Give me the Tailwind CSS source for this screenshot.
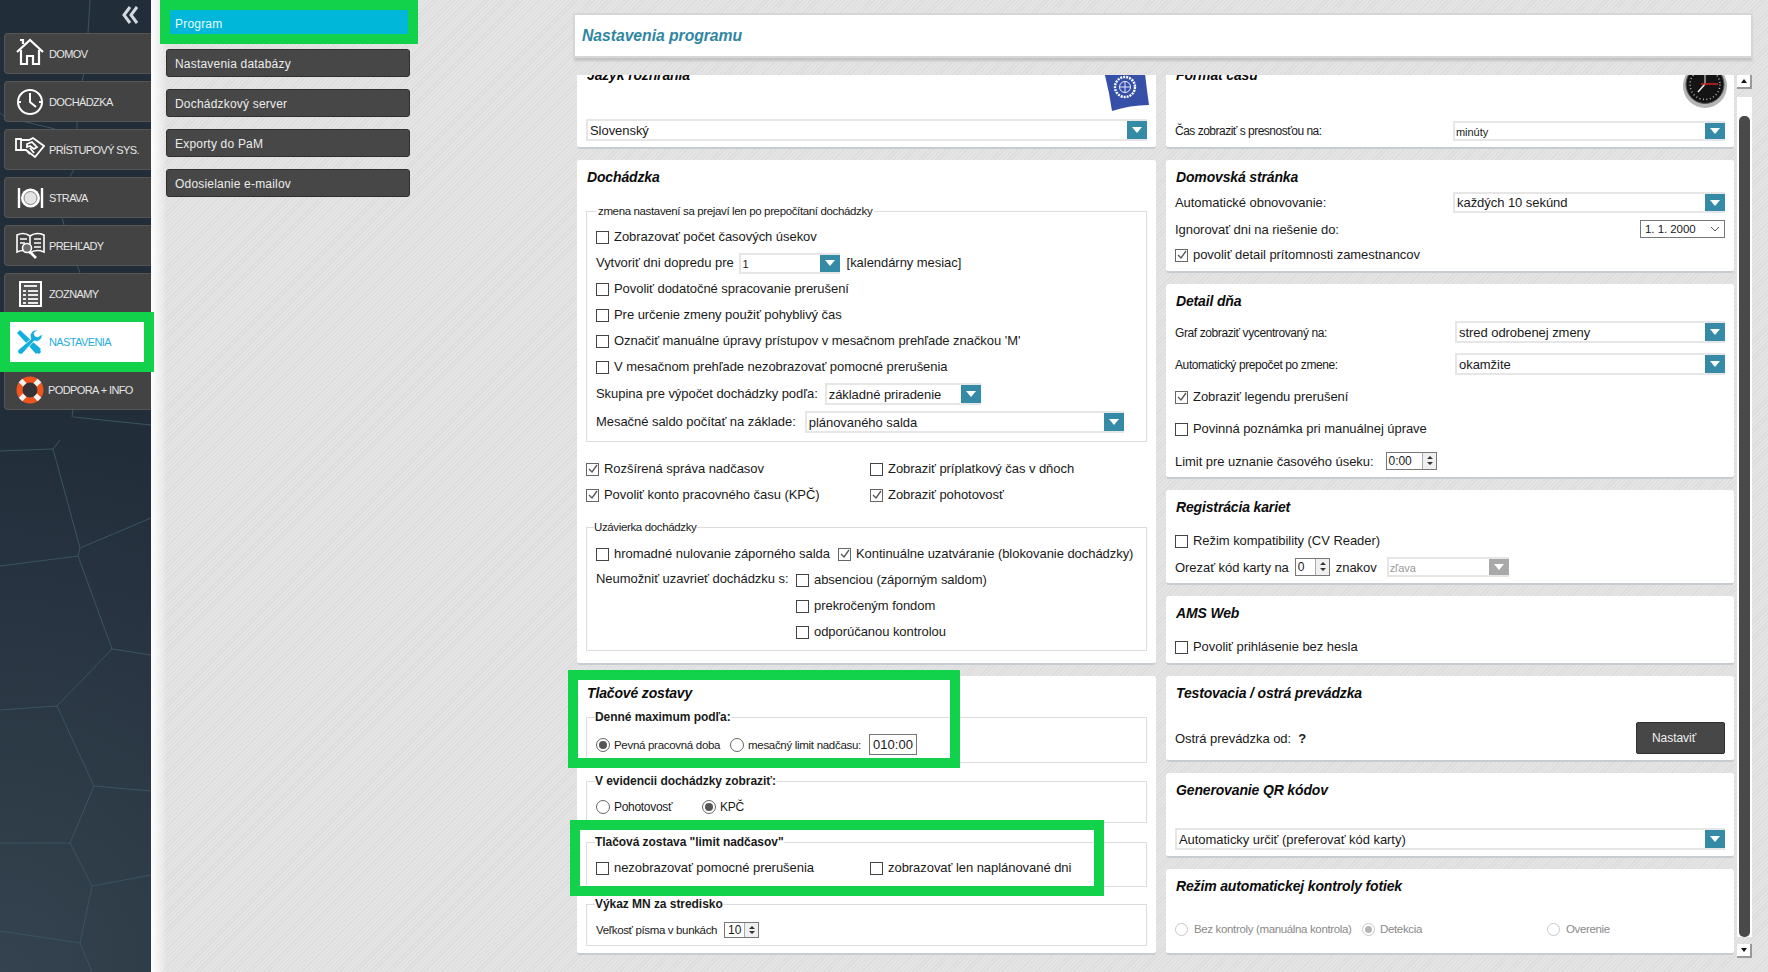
<!DOCTYPE html>
<html lang="sk">
<head>
  <meta charset="UTF-8" />
  <title>Nastavenia programu</title>
  <script src="https://cdn.jsdelivr.net/npm/@tailwindcss/browser@4"></script>
</head>
<body class="overflow-hidden font-['Liberation_Sans',Arial,sans-serif] text-[13px] leading-[16px] tracking-[-0.05px] text-[#1a1a1a]">
<div class="relative flex h-[972px] w-[1768px] overflow-hidden bg-[#e2e2e2] bg-[repeating-linear-gradient(135deg,#dcdcdc_0,#dcdcdc_1px,#e4e4e4_1px,#e4e4e4_3px)]">

  <!-- sidebar -->
  <aside class="relative z-10 w-[151px] h-full shrink-0 bg-[#222d3a] bg-[radial-gradient(circle_at_0%_100%,#34434f_0,#222d3a_55%)]">
    <svg class="absolute inset-0" width="151" height="972" fill="none" stroke="#3a5560" stroke-width="1">
      <path d="M90 0L88 33M84 73L82 81M77 121L77 129M74 169L70 177M62 217L64 225M77 265L80 273M0 113L5 117L55 129" />
      <path d="M72 417L73 410M73 417L151 425M0 451L53 449L60 440M53 449L80 548L151 518M80 548L78 556M0 566L78 556L112 649L151 655M112 649L57 706M0 710L57 706L94 786L151 791M94 786L70 843M0 843L70 843L92 886L151 875M92 886L80 943M0 931L80 943L92 972" />
    </svg>
    <div class="relative flex justify-end pt-[6px] pr-[13px] h-[33px]">
      <svg width="16" height="18" viewBox="0 0 16 18" fill="none" stroke="#d4d9dd" stroke-width="3">
        <path d="M8 1L2 9l6 8M15 1L9 9l6 8" />
      </svg>
    </div>
    <nav class="relative flex flex-col gap-[7px] pl-[4px] text-[11px] tracking-[-0.6px] text-[#e6e6e6]">
      <a class="flex items-center h-[41px] rounded-l-[4px] border border-r-0 border-[#565656] bg-[#434343]">
        <svg class="ml-[11px] w-[28px] h-[28px] -mt-[4px]" viewBox="0 0 28 28" fill="none" stroke="#fff" stroke-width="2.200"><path d="M1 14L14 2l13 12M5 12v14h6v-8h6v8h6V12M4 2h3v4" /></svg>
        <span class="ml-[5px]">DOMOV</span>
      </a>
      <a class="flex items-center h-[41px] rounded-l-[4px] border border-r-0 border-[#565656] bg-[#434343]">
        <svg class="ml-[11px] w-[28px] h-[28px]" viewBox="0 0 28 28" fill="none" stroke="#fff" stroke-width="2"><circle cx="14" cy="14" r="12" /><path d="M14 5v9l6 5M2 14h3M23 14h3" /></svg>
        <span class="ml-[5px]">DOCHÁDZKA</span>
      </a>
      <a class="flex items-center h-[41px] rounded-l-[4px] border border-r-0 border-[#565656] bg-[#434343]">
        <svg class="ml-[10px] w-[30px] h-[22px] -mt-[5px]" viewBox="0 0 30 22" fill="none" stroke="#fff" stroke-width="1.800"><path d="M1 3h5v11H1zM6 4l8 0 4-2 11 8-9 11-9-7-5 0M12 8l5-2 5 5-3 2-4-3-3 1zM12 15l3 3M15 12l4 5" /></svg>
        <span class="ml-[4px] whitespace-nowrap">PRÍSTUPOVÝ SYS.</span>
      </a>
      <a class="flex items-center h-[41px] rounded-l-[4px] border border-r-0 border-[#565656] bg-[#434343]">
        <svg class="ml-[12px] w-[27px] h-[24px]" viewBox="0 0 27 24" fill="none" stroke="#fff"><circle cx="13.500" cy="12" r="9.500" fill="#fff" stroke="none" /><circle cx="13.500" cy="12" r="6.500" fill="#e4e4e4" stroke="#888" /><path d="M2 2v20M25 2v20" stroke-width="2.400" /></svg>
        <span class="ml-[5px]">STRAVA</span>
      </a>
      <a class="flex items-center h-[41px] rounded-l-[4px] border border-r-0 border-[#565656] bg-[#434343]">
        <svg class="ml-[11px] w-[29px] h-[27px]" viewBox="0 0 29 27" fill="none" stroke="#fff" stroke-width="1.600"><path d="M14 4C10 1 5 1 1 3v17c4-2 9-2 13 1 4-3 9-3 14-1V3c-5-2-10-2-14 1zM14 4v17M4 7h7M4 11h5M18 7h7M18 11h7M18 15h7" /><circle cx="11" cy="16" r="4.500" fill="#6a6a6a" /><path d="M14 20l6 6" stroke-width="2.600" /></svg>
        <span class="ml-[4px]">PREHĽADY</span>
      </a>
      <a class="flex items-center h-[41px] rounded-l-[4px] border border-r-0 border-[#565656] bg-[#434343]">
        <svg class="ml-[14px] w-[23px] h-[26px]" viewBox="0 0 23 26"><rect x="1" y="1" width="21" height="24" fill="#555" stroke="#fff" stroke-width="2" /><path d="M5 5h13M4 10h3M9 10h10M4 14h3M9 14h10M4 18h3M9 18h10M4 22h3M9 22h10" stroke="#e8e8e8" stroke-width="1.800" /></svg>
        <span class="ml-[7px]">ZOZNAMY</span>
      </a>
      <a class="flex items-center h-[41px] bg-white text-[#27aedb]">
        <svg class="ml-[12px] w-[27px] h-[26px]" viewBox="0 0 27 26"><path d="M1 4l3-3 13 12 8 7-1 1 1 2-2 2-2-1-1 1-7-8z" fill="#13aee0" /><path d="M20 1a6 6 0 0 0-5 9L2 21a3 3 0 0 0 4 4l12-13a6 6 0 0 0 8-7l-4 3-3-1-1-3 4-3z" fill="#13aee0" stroke="#fff" stroke-width=".8" /></svg>
        <span class="ml-[6px]">NASTAVENIA</span>
      </a>
      <a class="flex items-center h-[41px] rounded-l-[4px] border border-r-0 border-[#565656] bg-[#434343]">
        <svg class="ml-[11px] w-[28px] h-[28px]" viewBox="0 0 28 28" fill="none"><circle cx="14" cy="14" r="7.500" fill="#333" /><circle cx="14" cy="14" r="10.500" stroke="#f0551e" stroke-width="6" /><path d="M4.500 4.500L8.700 8.700M23.500 4.500L19.300 8.700M4.500 23.500L8.700 19.300M23.500 23.500L19.300 19.300" stroke="#f2f2f2" stroke-width="5" /></svg>
        <span class="ml-[4px] whitespace-nowrap">PODPORA + INFO</span>
      </a>
    </nav>
  </aside>

  <!-- submenu -->
  <div class="relative w-[422px] shrink-0 pl-[15px] pt-[9px] bg-[linear-gradient(90deg,#ffffff_0,#ffffff00_16px)]">
    <div class="flex flex-col gap-[12px] w-[244px] text-[12px] text-[#ececec] tracking-[0.2px]">
      <a class="flex items-center h-[28px] pl-[9px] pt-[1px] bg-[#00b6d9] text-[#eafaff]">Program</a>
      <a class="flex items-center h-[28px] pl-[8px] pt-[1px] rounded-[3px] border border-[#2f2f2f] bg-[#474747]">Nastavenia databázy</a>
      <a class="flex items-center h-[28px] pl-[8px] pt-[1px] rounded-[3px] border border-[#2f2f2f] bg-[#474747]">Dochádzkový server</a>
      <a class="flex items-center h-[28px] pl-[8px] pt-[1px] rounded-[3px] border border-[#2f2f2f] bg-[#474747]">Exporty do PaM</a>
      <a class="flex items-center h-[28px] pl-[8px] pt-[1px] rounded-[3px] border border-[#2f2f2f] bg-[#474747]">Odosielanie e-mailov</a>
    </div>
  </div>

  <!-- main -->
  <main class="w-[1180px] shrink-0 pt-[13px]">
    <header class="flex items-center h-[45px] pl-[7px] pt-[1px] bg-white border-2 border-double border-[#d6d6d6] shadow-[0_4px_2px_-1px_#c4c4c4]">
      <h1 class="text-[15.75px] font-bold italic text-[#2f86a2]">Nastavenia programu</h1>
    </header>

    <div class="flex mt-[17px] ml-[4px] h-[885px] overflow-hidden">
      <!-- left column -->
      <div class="w-[579px] -mt-[17px] flex flex-col gap-[11px]">
        <section class="relative h-[91px] px-[9px] pt-[8px] bg-white rounded-[3px] border-b-2 border-[#c6ccd0]">
          <h2 class="h-[18px] pl-[1px] font-bold italic text-[14px] tracking-[-0.15px] leading-[18px] text-[#0c0c0c]">Jazyk rozhrania</h2>
          <svg class="absolute left-[523px] top-[6px]" width="50" height="50" viewBox="0 0 50 50">
            <path d="M2 0L44 0Q46 20 49 41Q30 41 12 47Q9 25 2 0z" fill="#3650a8" />
            <circle cx="25" cy="23" r="10" fill="none" stroke="#fff" stroke-width="2.400" stroke-dasharray="2 1" />
            <circle cx="25" cy="23" r="5.500" fill="#3650a8" stroke="#eef" />
            <path d="M20 23h10M25 18v10" stroke="#dfe5f5" />
          </svg>
          <div class="flex mt-[35px] h-[22px] border-2 border-r-0 border-[#e6e6e6]">
            <span class="flex-1 pl-[2px] leading-[20px]">Slovenský</span>
            <span class="flex items-center justify-center w-[20px] h-[18px] bg-[#358aa5]"><svg width="10" height="6"><path d="M0 0h10L5 6z" fill="#fff" /></svg></span>
          </div>
        </section>

        <section class="h-[505px] px-[9px] pt-[8px] bg-white rounded-[3px] border-b-2 border-[#c6ccd0]">
          <h2 class="h-[18px] pl-[1px] font-bold italic text-[14px] tracking-[-0.15px] leading-[18px] text-[#0c0c0c]">Dochádzka</h2>
          <fieldset class="mt-[18px] px-[9px] pt-[6px] pb-[5px] border border-[#dcdcdc]">
            <legend class="px-[2px] text-[11.5px] leading-[14px] tracking-[-0.36px]">zmena nastavení sa prejaví len po prepočítaní dochádzky</legend>
            <label class="flex items-center h-[26px] gap-[5px]"><span class="w-[13px] h-[13px] border border-[#444]"></span>Zobrazovať počet časových úsekov</label>
            <div class="flex items-center h-[26px]">
              <span>Vytvoriť dni dopredu pre</span>
              <div class="flex ml-[5px] w-[101px] h-[21px] border-2 border-r-0 border-[#e6e6e6]">
                <span class="flex-1 pl-[2px] text-[11px] leading-[19px]">1</span>
                <span class="flex items-center justify-center w-[20px] h-[17px] bg-[#358aa5]"><svg width="10" height="6"><path d="M0 0h10L5 6z" fill="#fff" /></svg></span>
              </div>
              <span class="ml-[7px]">[kalendárny mesiac]</span>
            </div>
            <label class="flex items-center h-[26px] gap-[5px]"><span class="w-[13px] h-[13px] border border-[#444]"></span>Povoliť dodatočné spracovanie prerušení</label>
            <label class="flex items-center h-[26px] gap-[5px]"><span class="w-[13px] h-[13px] border border-[#444]"></span>Pre určenie zmeny použiť pohyblivý čas</label>
            <label class="flex items-center h-[26px] gap-[5px]"><span class="w-[13px] h-[13px] border border-[#444]"></span>Označiť manuálne úpravy prístupov v mesačnom prehľade značkou 'M'</label>
            <label class="flex items-center h-[26px] gap-[5px]"><span class="w-[13px] h-[13px] border border-[#444]"></span>V mesačnom prehľade nezobrazovať pomocné prerušenia</label>
            <div class="flex items-center h-[28px]">
              <span>Skupina pre výpočet dochádzky podľa:</span>
              <div class="flex ml-[7px] w-[156px] h-[22px] border-2 border-r-0 border-[#e6e6e6]">
                <span class="flex-1 pl-[2px] leading-[20px]">základné priradenie</span>
                <span class="flex items-center justify-center w-[20px] h-[18px] bg-[#358aa5]"><svg width="10" height="6"><path d="M0 0h10L5 6z" fill="#fff" /></svg></span>
              </div>
            </div>
            <div class="flex items-center h-[28px]">
              <span>Mesačné saldo počítať na základe:</span>
              <div class="flex ml-[9px] w-[319px] h-[22px] border-2 border-r-0 border-[#e6e6e6]">
                <span class="flex-1 pl-[2px] leading-[20px]">plánovaného salda</span>
                <span class="flex items-center justify-center w-[20px] h-[18px] bg-[#358aa5]"><svg width="10" height="6"><path d="M0 0h10L5 6z" fill="#fff" /></svg></span>
              </div>
            </div>
          </fieldset>
          <div class="grid grid-cols-[284px_1fr] mt-[14px]">
            <label class="flex items-center h-[26px] gap-[5px]"><span class="flex items-center justify-center w-[13px] h-[13px] border border-[#666]"><svg width="11" height="11" fill="none" stroke="#555" stroke-width="1.300"><path d="M2 5l3 3 5-7" /></svg></span>Rozšírená správa nadčasov</label>
            <label class="flex items-center h-[26px] gap-[5px]"><span class="w-[13px] h-[13px] border border-[#444]"></span>Zobraziť príplatkový čas v dňoch</label>
            <label class="flex items-center h-[26px] gap-[5px]"><span class="flex items-center justify-center w-[13px] h-[13px] border border-[#666]"><svg width="11" height="11" fill="none" stroke="#555" stroke-width="1.300"><path d="M2 5l3 3 5-7" /></svg></span>Povoliť konto pracovného času (KPČ)</label>
            <label class="flex items-center h-[26px] gap-[5px]"><span class="flex items-center justify-center w-[13px] h-[13px] border border-[#666]"><svg width="11" height="11" fill="none" stroke="#555" stroke-width="1.300"><path d="M2 5l3 3 5-7" /></svg></span>Zobraziť pohotovosť</label>
          </div>
          <fieldset class="mt-[12px] px-[9px] pt-[7px] pb-[5px] border border-[#dcdcdc]">
            <legend class="-ml-[2px] text-[11.5px] leading-[14px] tracking-[-0.36px]">Uzávierka dochádzky</legend>
            <div class="flex">
              <label class="flex items-center h-[26px] gap-[5px] w-[242px]"><span class="w-[13px] h-[13px] border border-[#444]"></span>hromadné nulovanie záporného salda</label>
              <label class="flex items-center h-[26px] gap-[5px]"><span class="flex items-center justify-center w-[13px] h-[13px] border border-[#666]"><svg width="11" height="11" fill="none" stroke="#555" stroke-width="1.300"><path d="M2 5l3 3 5-7" /></svg></span>Kontinuálne uzatváranie (blokovanie dochádzky)</label>
            </div>
            <div class="flex">
              <span class="w-[200px] h-[26px] leading-[24px]">Neumožniť uzavrieť dochádzku s:</span>
              <div>
                <label class="flex items-center h-[26px] gap-[5px]"><span class="w-[13px] h-[13px] border border-[#444]"></span>absenciou (záporným saldom)</label>
                <label class="flex items-center h-[26px] gap-[5px]"><span class="w-[13px] h-[13px] border border-[#444]"></span>prekročeným fondom</label>
                <label class="flex items-center h-[26px] gap-[5px]"><span class="w-[13px] h-[13px] border border-[#444]"></span>odporúčanou kontrolou</label>
              </div>
            </div>
          </fieldset>
        </section>

        <section class="h-[279px] px-[9px] pt-[8px] bg-white rounded-[3px] border-b-2 border-[#c6ccd0]">
          <h2 class="h-[18px] pl-[1px] font-bold italic text-[14px] tracking-[-0.15px] leading-[18px] text-[#0c0c0c]">Tlačové zostavy</h2>
          <fieldset class="mt-[8px] px-[9px] pt-[10px] pb-[7px] border border-[#dcdcdc]">
            <legend class="-ml-[1px] font-bold text-[12px] leading-[14px]">Denné maximum podľa:</legend>
            <div class="flex items-center h-[21px] text-[11.5px] tracking-[-0.3px]">
              <span class="flex items-center justify-center w-[14px] h-[14px] rounded-full border border-[#666]"><span class="w-[8px] h-[8px] rounded-full bg-[#555]"></span></span>
              <span class="ml-[4px] w-[116px]">Pevná pracovná doba</span>
              <span class="w-[14px] h-[14px] rounded-full border border-[#666]"></span>
              <span class="ml-[4px] w-[121px]">mesačný limit nadčasu:</span>
              <span class="flex items-center justify-center w-[48px] h-[21px] border border-[#777] text-[13px] tracking-normal">010:00</span>
            </div>
          </fieldset>
          <fieldset class="mt-[11px] px-[9px] pt-[7px] pb-[3px] border border-[#dcdcdc]">
            <legend class="-ml-[1px] font-bold text-[12px] leading-[14px]">V evidencii dochádzky zobraziť:</legend>
            <div class="flex items-center h-[24px] text-[12px] tracking-[-0.3px]">
              <span class="w-[14px] h-[14px] rounded-full border border-[#666]"></span>
              <span class="ml-[4px] w-[88px]">Pohotovosť</span>
              <span class="flex items-center justify-center w-[14px] h-[14px] rounded-full border border-[#666]"><span class="w-[8px] h-[8px] rounded-full bg-[#555]"></span></span>
              <span class="ml-[4px]">KPČ</span>
            </div>
          </fieldset>
          <fieldset class="mt-[12px] px-[9px] pt-[7px] pb-[6px] border border-[#dcdcdc]">
            <legend class="-ml-[1px] font-bold text-[12px] leading-[14px]">Tlačová zostava "limit nadčasov"</legend>
            <div class="grid grid-cols-[274px_1fr]">
              <label class="flex items-center h-[24px] gap-[5px]"><span class="w-[13px] h-[13px] border border-[#444]"></span>nezobrazovať pomocné prerušenia</label>
              <label class="flex items-center h-[24px] gap-[5px]"><span class="w-[13px] h-[13px] border border-[#444]"></span>zobrazovať len naplánované dni</label>
            </div>
          </fieldset>
          <fieldset class="mt-[10px] px-[9px] pt-[7px] pb-[3px] border border-[#dcdcdc]">
            <legend class="-ml-[1px] font-bold text-[12px] leading-[14px]">Výkaz MN za stredisko</legend>
            <div class="flex items-center h-[24px] text-[11.5px] tracking-[-0.35px]">
              <span>Veľkosť písma v bunkách</span>
              <span class="flex items-center justify-between ml-[7px] w-[35px] h-[16px] pl-[3px] border border-[#777] text-[12px] tracking-normal">10
                <span class="flex flex-col justify-center w-[14px] h-full border-l border-[#aaa] bg-[#f0f0f0]"><svg width="14" height="14" fill="#333"><path d="M4 6l3-3 3 3zM4 8h6l-3 3z" /></svg></span>
              </span>
            </div>
          </fieldset>
        </section>
      </div>

      <!-- right column -->
      <div class="w-[568px] ml-[10px] -mt-[17px] flex flex-col gap-[11px]">
        <section class="relative h-[91px] px-[9px] pt-[8px] bg-white rounded-[3px] border-b-2 border-[#c6ccd0]">
          <h2 class="h-[18px] pl-[1px] font-bold italic text-[14px] tracking-[-0.15px] leading-[18px] text-[#0c0c0c]">Formát času</h2>
          <svg class="absolute right-[7px] top-[6px]" width="44" height="44" viewBox="0 0 44 44">
            <circle cx="22" cy="22" r="22" fill="#b5b5b5" />
            <circle cx="22" cy="20.500" r="19" fill="#141414" stroke="#555" />
            <circle cx="22" cy="20.500" r="15" fill="none" stroke="#bbb" stroke-width="1.500" stroke-dasharray="1 2.500" />
            <path d="M22 20V6" stroke="#eee" /><path d="M22 20l-7 8" stroke="#eee" stroke-width="1.500" /><path d="M18 20h17" stroke="#d62020" stroke-width="1.500" />
          </svg>
          <div class="flex items-center justify-between mt-[37px] h-[20px]">
            <span class="text-[12px] tracking-[-0.5px]">Čas zobraziť s presnosťou na:</span>
            <div class="flex w-[272px] h-[20px] border-2 border-r-0 border-[#e6e6e6]">
              <span class="flex-1 pl-[1px] text-[11px] leading-[18px]">minúty</span>
              <span class="flex items-center justify-center w-[20px] h-[16px] bg-[#358aa5]"><svg width="10" height="6"><path d="M0 0h10L5 6z" fill="#fff" /></svg></span>
            </div>
          </div>
        </section>

        <section class="h-[113px] px-[9px] pt-[8px] bg-white rounded-[3px] border-b-2 border-[#c6ccd0]">
          <h2 class="h-[18px] pl-[1px] font-bold italic text-[14px] tracking-[-0.15px] leading-[18px] text-[#0c0c0c]">Domovská stránka</h2>
          <div class="flex items-center justify-between mt-[6px] h-[21px]">
            <span>Automatické obnovovanie:</span>
            <div class="flex w-[272px] h-[21px] border-2 border-r-0 border-[#e6e6e6]">
              <span class="flex-1 pl-[2px] leading-[17px]">každých 10 sekúnd</span>
              <span class="flex items-center justify-center w-[20px] h-[17px] bg-[#358aa5]"><svg width="10" height="6"><path d="M0 0h10L5 6z" fill="#fff" /></svg></span>
            </div>
          </div>
          <div class="flex items-center justify-between mt-[7px] h-[18px]">
            <span class="pt-[1px]">Ignorovať dni na riešenie do:</span>
            <div class="flex items-center justify-between w-[85px] h-[18px] px-[4px] border border-[#777] text-[11.5px]">1. 1. 2000 <svg width="10" height="6" fill="none" stroke="#555"><path d="M1 1l4 4 4-4" /></svg></div>
          </div>
          <label class="flex items-center h-[20px] mt-[7px] gap-[5px]"><span class="flex items-center justify-center w-[13px] h-[13px] border border-[#666]"><svg width="11" height="11" fill="none" stroke="#555" stroke-width="1.300"><path d="M2 5l3 3 5-7" /></svg></span>povoliť detail prítomnosti zamestnancov</label>
        </section>

        <section class="h-[195px] px-[9px] pt-[8px] bg-white rounded-[3px] border-b-2 border-[#c6ccd0]">
          <h2 class="h-[18px] pl-[1px] font-bold italic text-[14px] tracking-[-0.15px] leading-[18px] text-[#0c0c0c]">Detail dňa</h2>
          <div class="flex items-center justify-between mt-[11px] h-[22px]">
            <span class="pt-[1px] text-[12px] tracking-[-0.4px]">Graf zobraziť vycentrovaný na:</span>
            <div class="flex w-[270px] h-[22px] border-2 border-r-0 border-[#e6e6e6]">
              <span class="flex-1 pl-[2px] leading-[20px]">stred odrobenej zmeny</span>
              <span class="flex items-center justify-center w-[20px] h-[18px] bg-[#358aa5]"><svg width="10" height="6"><path d="M0 0h10L5 6z" fill="#fff" /></svg></span>
            </div>
          </div>
          <div class="flex items-center justify-between mt-[10px] h-[22px]">
            <span class="pt-[1px] text-[12px] tracking-[-0.4px]">Automatický prepočet po zmene:</span>
            <div class="flex w-[270px] h-[22px] border-2 border-r-0 border-[#e6e6e6]">
              <span class="flex-1 pl-[2px] leading-[20px]">okamžite</span>
              <span class="flex items-center justify-center w-[20px] h-[18px] bg-[#358aa5]"><svg width="10" height="6"><path d="M0 0h10L5 6z" fill="#fff" /></svg></span>
            </div>
          </div>
          <label class="flex items-center h-[20px] mt-[12px] gap-[5px]"><span class="flex items-center justify-center w-[13px] h-[13px] border border-[#666]"><svg width="11" height="11" fill="none" stroke="#555" stroke-width="1.300"><path d="M2 5l3 3 5-7" /></svg></span>Zobraziť legendu prerušení</label>
          <label class="flex items-center h-[20px] mt-[12px] gap-[5px]"><span class="w-[13px] h-[13px] border border-[#444]"></span>Povinná poznámka pri manuálnej úprave</label>
          <div class="flex items-center mt-[13px] h-[18px]">
            <span class="pt-[1px]">Limit pre uznanie časového úseku:</span>
            <span class="flex items-center justify-between ml-[12px] w-[51px] h-[18px] pl-[2px] border border-[#777] text-[12px]">0:00
              <span class="w-[14px] h-full border-l border-[#aaa] bg-[#f0f0f0]"><svg width="14" height="16" fill="#333"><path d="M4 6l3-3 3 3zM4 9h6l-3 3z" /></svg></span>
            </span>
          </div>
        </section>

        <section class="h-[95px] px-[9px] pt-[8px] bg-white rounded-[3px] border-b-2 border-[#c6ccd0]">
          <h2 class="h-[18px] pl-[1px] font-bold italic text-[14px] tracking-[-0.15px] leading-[18px] text-[#0c0c0c]">Registrácia kariet</h2>
          <label class="flex items-center h-[20px] mt-[15px] gap-[5px]"><span class="w-[13px] h-[13px] border border-[#444]"></span>Režim kompatibility (CV Reader)</label>
          <div class="flex items-center mt-[6px] h-[20px]">
            <span class="pt-[1px]">Orezať kód karty na</span>
            <span class="flex items-center justify-between ml-[6px] w-[35px] h-[18px] pl-[2px] border border-[#777] text-[12px]">0
              <span class="w-[14px] h-full border-l border-[#aaa] bg-[#f0f0f0]"><svg width="14" height="16" fill="#333"><path d="M4 6l3-3 3 3zM4 9h6l-3 3z" /></svg></span>
            </span>
            <span class="ml-[6px] pt-[1px]">znakov</span>
            <div class="flex ml-[10px] w-[122px] h-[20px] border-2 border-r-0 border-[#e6e6e6]">
              <span class="flex-1 pl-[1px] text-[11px] leading-[18px] text-[#999]">zľava</span>
              <span class="flex items-center justify-center w-[20px] h-[16px] bg-[#a9a9a9]"><svg width="10" height="6"><path d="M0 0h10L5 6z" fill="#fff" /></svg></span>
            </div>
          </div>
        </section>

        <section class="h-[69px] px-[9px] pt-[8px] bg-white rounded-[3px] border-b-2 border-[#c6ccd0]">
          <h2 class="h-[18px] pl-[1px] font-bold italic text-[14px] tracking-[-0.15px] leading-[18px] text-[#0c0c0c]">AMS Web</h2>
          <label class="flex items-center h-[20px] mt-[15px] gap-[5px]"><span class="w-[13px] h-[13px] border border-[#444]"></span>Povoliť prihlásenie bez hesla</label>
        </section>

        <section class="h-[86px] px-[9px] pt-[8px] bg-white rounded-[3px] border-b-2 border-[#c6ccd0]">
          <h2 class="h-[18px] pl-[1px] font-bold italic text-[14px] tracking-[-0.15px] leading-[18px] text-[#0c0c0c]">Testovacia / ostrá prevádzka</h2>
          <div class="flex items-center justify-between mt-[20px] h-[32px]">
            <span class="pt-[1px]">Ostrá prevádzka od:&nbsp; <b class="font-bold">?</b></span>
            <a class="flex items-center w-[89px] h-[32px] pl-[15px] rounded-[2px] border border-[#2f2f2f] bg-[#474747] text-[12px] text-[#f0f0f0]">Nastaviť</a>
          </div>
        </section>

        <section class="h-[85px] px-[9px] pt-[8px] bg-white rounded-[3px] border-b-2 border-[#c6ccd0]">
          <h2 class="h-[18px] pl-[1px] font-bold italic text-[14px] tracking-[-0.15px] leading-[18px] text-[#0c0c0c]">Generovanie QR kódov</h2>
          <div class="flex mt-[29px] h-[22px] border-2 border-r-0 border-[#e6e6e6]">
            <span class="flex-1 pl-[2px] leading-[20px]">Automaticky určiť (preferovať kód karty)</span>
            <span class="flex items-center justify-center w-[20px] h-[18px] bg-[#358aa5]"><svg width="10" height="6"><path d="M0 0h10L5 6z" fill="#fff" /></svg></span>
          </div>
        </section>

        <section class="h-[86px] px-[9px] pt-[8px] bg-white rounded-[3px] border-b-2 border-[#c6ccd0]">
          <h2 class="h-[18px] pl-[1px] font-bold italic text-[14px] tracking-[-0.15px] leading-[18px] text-[#0c0c0c]">Režim automatickej kontroly fotiek</h2>
          <div class="flex items-center mt-[24px] h-[20px] text-[11.5px] tracking-[-0.35px] text-[#8a8a8a]">
            <span class="w-[13px] h-[13px] rounded-full border border-[#c8c8c8]"></span>
            <span class="ml-[6px] w-[168px]">Bez kontroly (manuálna kontrola)</span>
            <span class="flex items-center justify-center w-[13px] h-[13px] rounded-full border border-[#c8c8c8]"><span class="w-[7px] h-[7px] rounded-full bg-[#b5b5b5]"></span></span>
            <span class="ml-[5px] w-[167px]">Detekcia</span>
            <span class="w-[13px] h-[13px] rounded-full border border-[#c8c8c8]"></span>
            <span class="ml-[6px]">Overenie</span>
          </div>
        </section>
      </div>

      <!-- scrollbar -->
      <div class="w-[15px] ml-[3px]">
        <div class="flex items-center justify-center h-[14px] bg-white border-r-2 border-b-2 border-[#9a9a9a]"><svg width="6" height="4"><path d="M0 4h6L3 0z" fill="#111" /></svg></div>
        <div class="mt-[8px] h-[840px] pt-[19px] bg-white">
          <div class="ml-[2px] w-[11px] h-[821px] rounded-[5px] bg-[#494949]"></div>
        </div>
        <div class="flex items-center justify-center mt-[7px] h-[14px] bg-white border-r-2 border-b-2 border-[#9a9a9a]"><svg width="6" height="4"><path d="M0 0h6L3 4z" fill="#111" /></svg></div>
      </div>
    </div>
  </main>

  <!-- green annotation frames -->
  <div class="absolute z-20 left-0 top-[312px] w-[154px] h-[60px] border-[10px] border-[#11d24a]"></div>
  <div class="absolute z-20 left-[160px] top-0 w-[258px] h-[44px] border-[10px] border-[#11d24a]"></div>
  <div class="absolute z-20 left-[568px] top-[670px] w-[392px] h-[98px] border-[10px] border-[#11d24a]"></div>
  <div class="absolute z-20 left-[570px] top-[820px] w-[534px] h-[76px] border-[10px] border-[#11d24a]"></div>
</div>
</body>
</html>
